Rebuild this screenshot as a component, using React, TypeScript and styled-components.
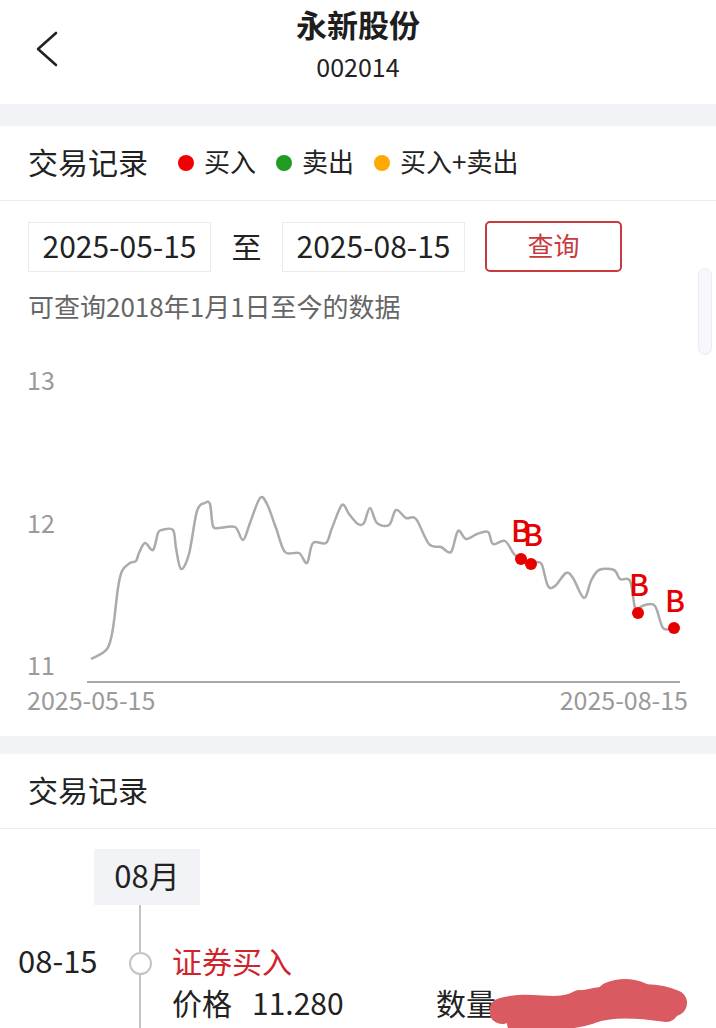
import styled, { createGlobalStyle } from 'styled-components';

const GlobalStyle = createGlobalStyle`
    html,
    body {
        margin: 0;
        padding: 0;
        background: #fff;
    }

    body {
        font-family: 'Noto Sans CJK SC', 'Noto Sans', sans-serif;
        color: #222;
    }
`;

const colors = {
    text: '#222',
    muted: '#666',
    axis: '#9a9a9a',
    band: '#f2f3f7',
    divider: '#ededed',
    red: '#e60000',
    brand: '#c93a3f',
};

const Page = styled.div`
    position: relative;
    width: 716px;
    height: 1028px;
    overflow: hidden;
    background: #fff;
`;

const Header = styled.header`
    display: grid;
    grid-template-columns: 90px 1fr 90px;
    height: 104px;
`;

const BackButton = styled.div`
    display: flex;
    padding: 31px 0 0 35px;

    svg {
        width: 24px;
        height: 36px;
    }
`;

const TitleBlock = styled.div`
    display: flex;
    flex-direction: column;
    align-items: center;
    padding-top: 3px;
`;

const Title = styled.div`
    font-size: 31px;
    font-weight: 700;
    line-height: 42px;
    color: #1e1e1e;
`;

const Code = styled.div`
    margin-top: 6px;
    font-size: 25px;
    line-height: 30px;
    color: #222;
`;

const Band = styled.div<{ $h: number }>`
    height: ${(p) => p.$h}px;
    background: ${colors.band};
`;

const SectionHead = styled.div`
    display: flex;
    align-items: center;
    box-sizing: border-box;
    height: 75px;
    padding: 0 28px 4px;
    border-bottom: 1px solid ${colors.divider};
`;

const SectionTitle = styled.div`
    font-size: 30px;
    line-height: 40px;
    color: #222;
`;

const Legend = styled.div`
    display: flex;
    align-items: center;
    gap: 20px;
    margin-left: 30px;
`;

const LegendItem = styled.div`
    display: flex;
    align-items: center;
    gap: 10px;
    font-size: 26px;
    line-height: 36px;
    color: #222;
`;

const Dot = styled.span<{ $color: string }>`
    width: 16px;
    height: 16px;
    margin-top: 3px;
    border-radius: 50%;
    background: ${(p) => p.$color};
`;

const Filter = styled.div`
    padding: 20px 28px 0;
`;

const DateRow = styled.div`
    display: flex;
    align-items: center;
`;

const DateBox = styled.div`
    display: flex;
    align-items: center;
    justify-content: center;
    box-sizing: border-box;
    width: 183px;
    height: 50px;
    padding-bottom: 4px;
    border: 1px solid #ebebeb;
    font-size: 30px;
    color: #222;
`;

const To = styled.div`
    width: 71px;
    padding-bottom: 4px;
    text-align: center;
    font-size: 30px;
    color: #222;
`;

const QueryButton = styled.button`
    box-sizing: border-box;
    width: 137px;
    height: 51px;
    margin-left: 20px;
    padding: 0 0 4px;
    border: 2px solid ${colors.brand};
    border-radius: 5px;
    background: #fff;
    font-family: inherit;
    font-size: 26px;
    color: ${colors.brand};
`;

const Hint = styled.div`
    margin-top: 16px;
    font-size: 26px;
    line-height: 36px;
    color: ${colors.muted};
`;

const ScrollThumb = styled.div`
    position: absolute;
    left: 698px;
    top: 268px;
    width: 14px;
    height: 87px;
    box-sizing: border-box;
    border-radius: 7px;
    border: 1px solid #e9ecf3;
    background: #f6f8fd;
`;

const ChartWrap = styled.div`
    margin-top: 17px;
    height: 395px;

    svg {
        display: block;
    }
`;

const Timeline = styled.div`
    padding-top: 20px;
`;

const Month = styled.div`
    display: flex;
    align-items: center;
    justify-content: center;
    box-sizing: border-box;
    width: 106px;
    height: 56px;
    margin-left: 94px;
    padding-bottom: 6px;
    background: ${colors.band};
    font-size: 31px;
    color: #222;
`;

const Entry = styled.div`
    display: grid;
    grid-template-columns: 101px 42px 1fr;
    padding-left: 18px;
    min-height: 140px;
`;

const EntryDate = styled.div`
    padding-top: 34px;
    font-size: 31px;
    line-height: 42px;
    color: #222;
`;

const Rail = styled.div`
    display: flex;
    flex-direction: column;
    align-items: center;
`;

const RailLine = styled.div<{ $h?: number }>`
    width: 2px;
    background: #c4c4c4;
    ${(p) => (p.$h ? `height: ${p.$h}px;` : 'flex: 1;')}
`;

const RailNode = styled.div`
    box-sizing: border-box;
    width: 23px;
    height: 23px;
    border-radius: 50%;
    border: 2px solid #c4c4c4;
    background: #fff;
`;

const EntryBody = styled.div`
    padding: 34px 0 0 11px;
    font-size: 30px;
    line-height: 42px;
`;

const EntryType = styled.div`
    color: #d0242c;
`;

const EntryFields = styled.div`
    position: relative;
    display: flex;
    color: #222;
`;

const Field = styled.div<{ $w?: number }>`
    display: flex;
    gap: 20px;
    ${(p) => (p.$w ? `width: ${p.$w}px;` : '')}
`;

const Scribble = styled.svg`
    position: absolute;
    left: 318px;
    top: -8px;
`;

// closing price series, chart coordinates (x px, y px inside the svg)
const series: [number, number][] = [
    [91, 318], [107, 308], [113, 287], [118, 247], [122, 230], [130, 222], [136, 220],
    [139, 212], [145, 202], [153, 209], [158, 192], [162, 189], [173, 189], [176, 207],
    [181, 228], [189, 213], [197, 170], [205, 162], [210, 163], [213, 185], [219, 187],
    [235, 186], [243, 199], [250, 182], [260, 157], [267, 163], [276, 187], [285, 211],
    [299, 212], [307, 222], [313, 202], [326, 202], [332, 187], [342, 164], [349, 173],
    [358, 183], [364, 182], [370, 167], [377, 182], [389, 184], [396, 169], [406, 177],
    [416, 178], [429, 203], [441, 206], [451, 211], [458, 190], [466, 198], [477, 193],
    [488, 191], [493, 203], [505, 200], [514, 213], [523, 220], [537, 221], [542, 224],
    [548, 245], [555, 245], [566, 232], [573, 237], [584, 257], [591, 240], [599, 229],
    [614, 229], [620, 238], [630, 240], [635, 267], [639, 267], [645, 264], [655, 265],
    [663, 287], [673, 287],
];

const buys = [
    { x: 521, y: 218, lx: 521, ly: 201 },
    { x: 531, y: 223, lx: 533, ly: 205 },
    { x: 638, y: 272, lx: 639, ly: 255 },
    { x: 674, y: 287, lx: 675, ly: 271 },
];

const smoothPath = (pts: [number, number][]) => {
    let d = `M${pts[0][0]},${pts[0][1]}`;
    for (let i = 0; i < pts.length - 1; i++) {
        const p0 = pts[i - 1] || pts[i];
        const p1 = pts[i];
        const p2 = pts[i + 1];
        const p3 = pts[i + 2] || p2;
        const c1x = p1[0] + (p2[0] - p0[0]) / 6;
        const c1y = p1[1] + (p2[1] - p0[1]) / 6;
        const c2x = p2[0] - (p3[0] - p1[0]) / 6;
        const c2y = p2[1] - (p3[1] - p1[1]) / 6;
        d += ` C${c1x.toFixed(1)},${c1y.toFixed(1)} ${c2x.toFixed(1)},${c2y.toFixed(1)} ${p2[0]},${p2[1]}`;
    }
    return d;
};

const labelFont = "'Noto Sans CJK SC', 'Noto Sans', sans-serif";

const PriceChart = () => (
    <svg width="716" height="395" viewBox="0 0 716 395">
        <g fill={colors.axis} fontFamily={labelFont} fontSize="25">
            <text x="27" y="49">13</text>
            <text x="27" y="192">12</text>
            <text x="27" y="334">11</text>
        </g>
        <line x1="87" y1="341" x2="680" y2="341" stroke="#a8a8a8" strokeWidth="2" />
        <g fill={colors.axis} fontFamily={labelFont} fontSize="25">
            <text x="27" y="369">2025-05-15</text>
            <text x="688" y="369" textAnchor="end">2025-08-15</text>
        </g>
        <path d={smoothPath(series)} fill="none" stroke="#ababab" strokeWidth="2.5" strokeLinejoin="round" />
        {buys.map((b) => (
            <g key={b.x}>
                <circle cx={b.x} cy={b.y} r="6" fill={colors.red} />
                <text
                    x={b.lx}
                    y={b.ly}
                    fill={colors.red}
                    fontFamily={labelFont}
                    fontSize="30"
                    fontWeight="500"
                    textAnchor="middle"
                >
                    B
                </text>
            </g>
        ))}
    </svg>
);

const App = () => (
    <Page>
        <GlobalStyle />
        <Header>
            <BackButton>
                <svg viewBox="0 0 24 36" fill="none" stroke="#222" strokeWidth="2.6" strokeLinecap="round" strokeLinejoin="round">
                    <polyline points="21,2 3,18 21,34" />
                </svg>
            </BackButton>
            <TitleBlock>
                <Title>永新股份</Title>
                <Code>002014</Code>
            </TitleBlock>
            <div />
        </Header>
        <Band $h={22} />
        <SectionHead>
            <SectionTitle>交易记录</SectionTitle>
            <Legend>
                <LegendItem>
                    <Dot $color="#f00000" />
                    买入
                </LegendItem>
                <LegendItem>
                    <Dot $color="#1f9c22" />
                    卖出
                </LegendItem>
                <LegendItem>
                    <Dot $color="#ffa800" />
                    买入+卖出
                </LegendItem>
            </Legend>
        </SectionHead>
        <Filter>
            <DateRow>
                <DateBox>2025-05-15</DateBox>
                <To>至</To>
                <DateBox>2025-08-15</DateBox>
                <QueryButton>查询</QueryButton>
            </DateRow>
            <Hint>可查询2018年1月1日至今的数据</Hint>
        </Filter>
        <ChartWrap>
            <PriceChart />
        </ChartWrap>
        <Band $h={18} />
        <SectionHead>
            <SectionTitle>交易记录</SectionTitle>
        </SectionHead>
        <Timeline>
            <Month>08月</Month>
            <Entry>
                <EntryDate>08-15</EntryDate>
                <Rail>
                    <RailLine $h={47} />
                    <RailNode />
                    <RailLine />
                </Rail>
                <EntryBody>
                    <EntryType>证券买入</EntryType>
                    <EntryFields>
                        <Field $w={264}>
                            <span>价格</span>
                            <span>11.280</span>
                        </Field>
                        <Field>
                            <span>数量</span>
                        </Field>
                        <Scribble width="200" height="70" viewBox="0 0 200 70">
                            <g fill="none" stroke="#da5a61" strokeWidth="26" strokeLinecap="round" strokeLinejoin="round">
                                <path d="M12,38 C40,30 60,40 80,34 C100,28 120,24 140,26 C160,22 175,26 184,30" />
                                <path d="M30,50 C55,44 75,46 100,38 C120,30 150,32 176,36" />
                                <path d="M40,56 C60,52 70,40 90,30 M120,22 C130,18 140,18 150,22" />
                            </g>
                        </Scribble>
                    </EntryFields>
                </EntryBody>
            </Entry>
        </Timeline>
        <ScrollThumb />
    </Page>
);

export default App;
